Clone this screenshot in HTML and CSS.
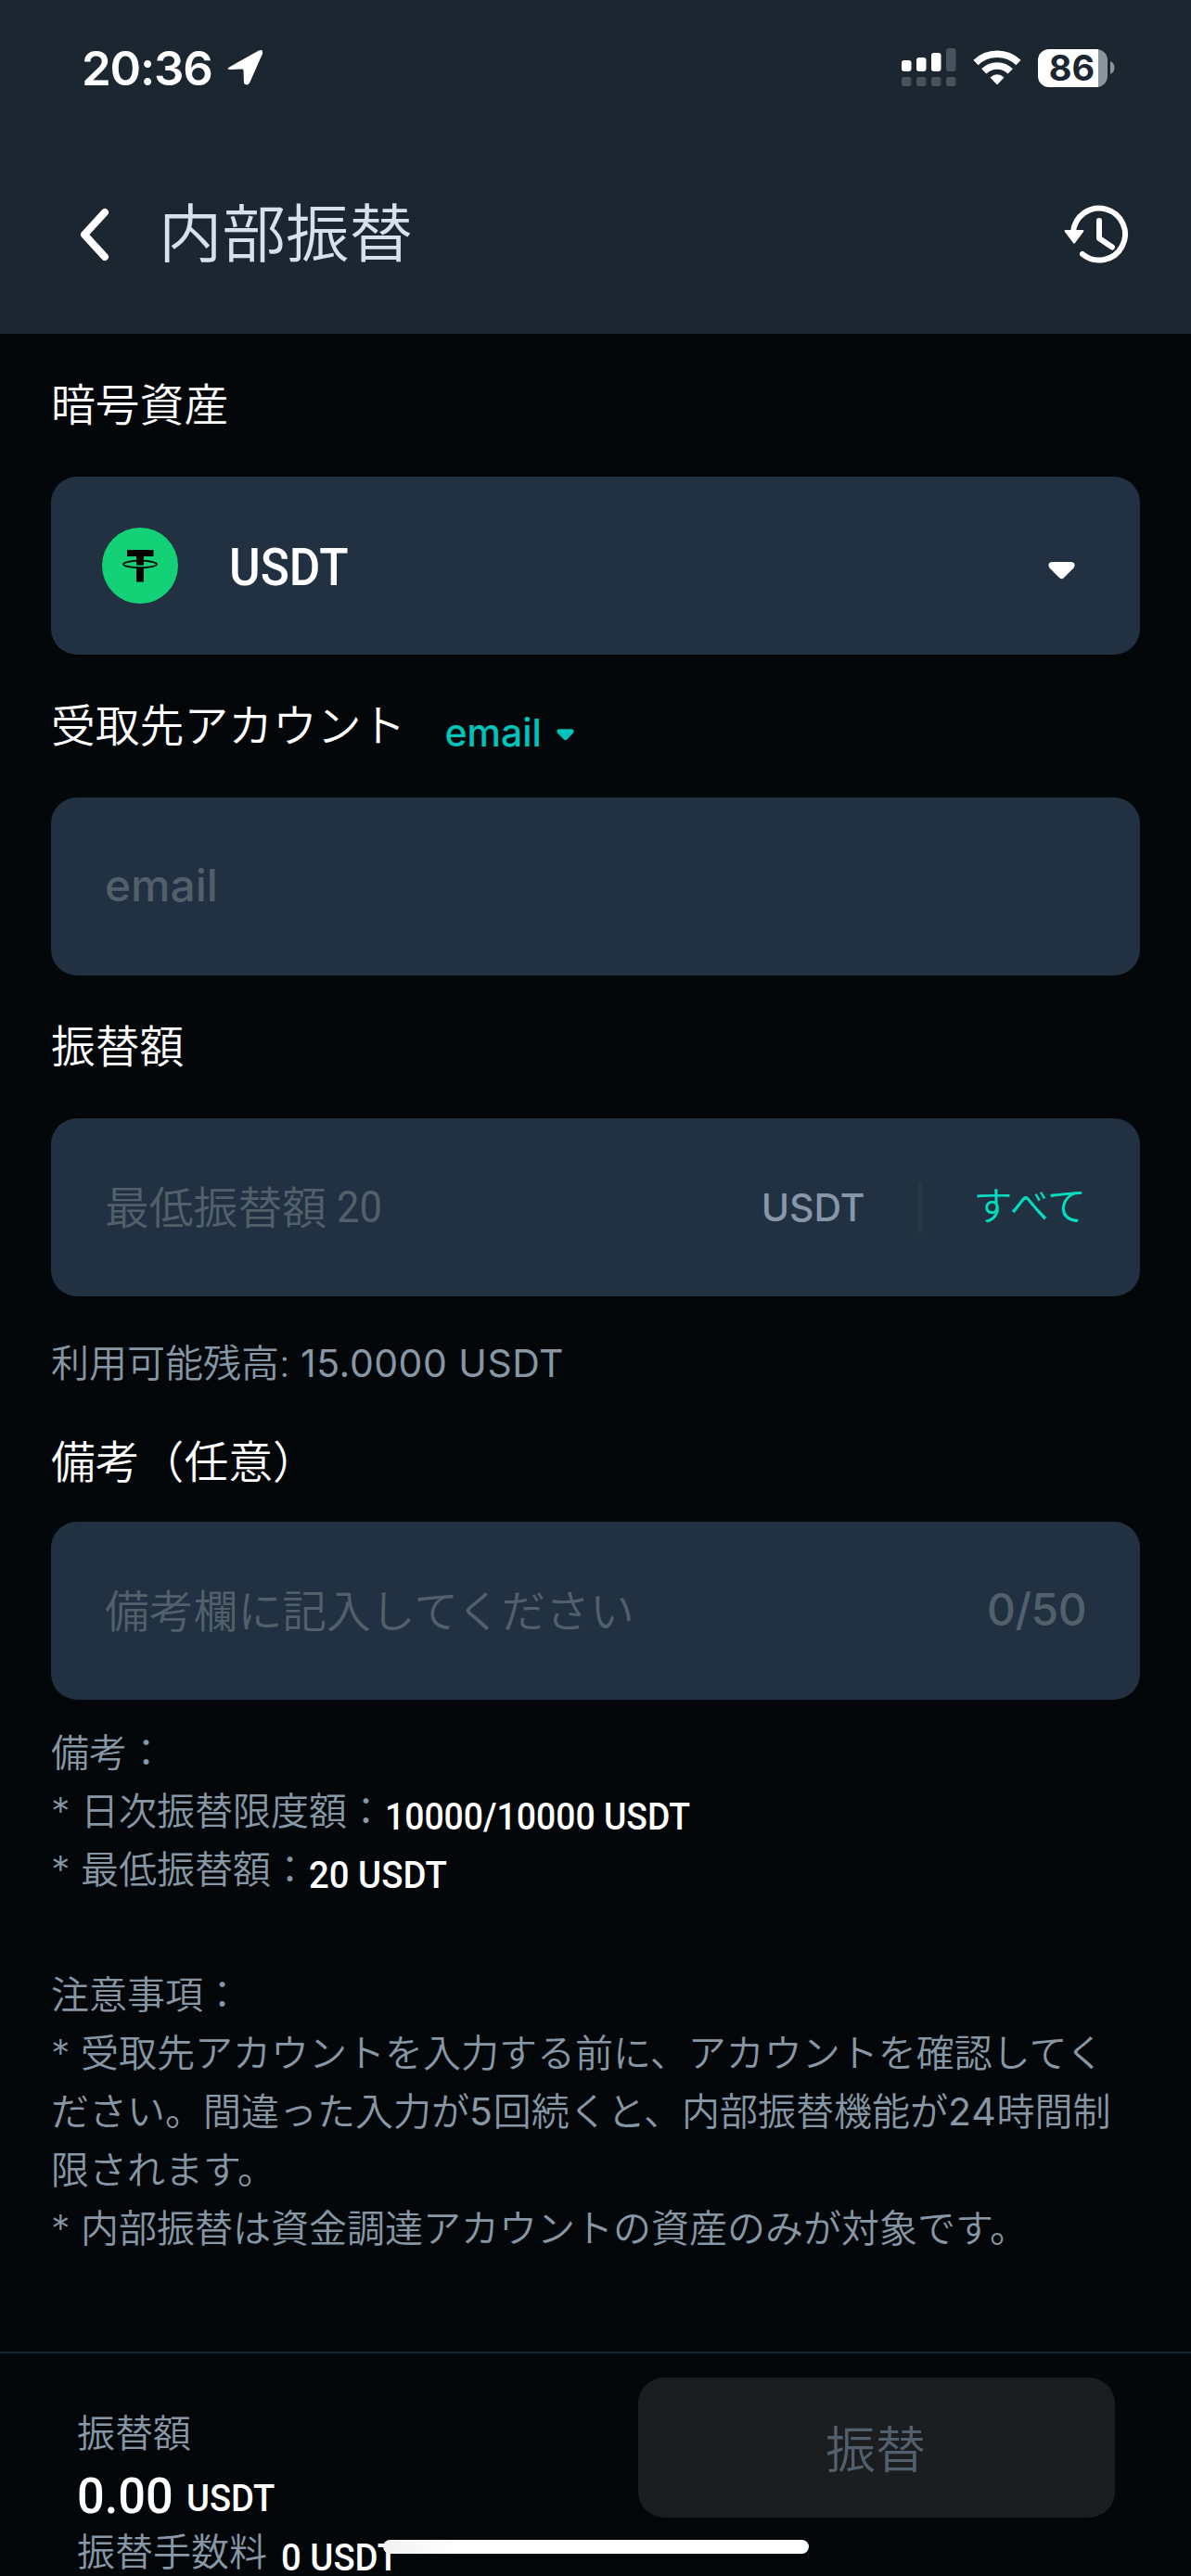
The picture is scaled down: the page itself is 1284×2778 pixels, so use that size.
FILE: index.html
```
<!DOCTYPE html>
<html lang="ja">
<head>
    <meta charset="UTF-8">
    <meta name="viewport" content="width=device-width, initial-scale=1.0">
    <title>内部振替</title>
    <link rel="stylesheet" href="styles.css">
</head>
<body>
    <header class="header">
        <div class="status-bar">
            <div class="status-left">
                <span class="time">20:36</span>
                <svg class="location" width="40" height="40" viewBox="0 0 40 40">
                    <path d="M3 19.5 L35 1.5 Q40 -0.5 39 5 L25 36.500 Q22.500 40 19 37 L18.500 23 Q18.500 21.500 17 21.500 L4 22 Q-0.500 22 3 19.500 Z" fill="#fff"/>
                </svg>
            </div>
            <div class="status-right">
                <svg width="59" height="42" viewBox="0 0 59 42">
                    <g fill="#fff">
                        <rect x="0" y="13" width="10.500" height="12" rx="3"/>
                        <rect x="16" y="10" width="10.500" height="15" rx="3"/>
                        <rect x="32" y="5" width="10.500" height="20" rx="3"/>
                    </g>
                    <g fill="#48535d">
                        <rect x="48" y="0" width="10.500" height="25" rx="3"/>
                        <rect x="0" y="31" width="10.500" height="10" rx="3"/>
                        <rect x="16" y="31" width="10.500" height="10" rx="3"/>
                        <rect x="32" y="31" width="10.500" height="10" rx="3"/>
                        <rect x="48" y="31" width="10.500" height="10" rx="3"/>
                    </g>
                </svg>
                <svg class="wifi" width="52" height="38" viewBox="0 0 52 38">
                    <path d="M3 13.500 A33 33 0 0 1 49 13.500" fill="none" stroke="#fff" stroke-width="7.500"/>
                    <path d="M11.800 22.800 A20 20 0 0 1 40.200 22.800" fill="none" stroke="#fff" stroke-width="7.500"/>
                    <path d="M18.500 29.500 Q26 23 33.500 29.500 L26.800 36.800 Q26 37.600 25.200 36.800 Z" fill="#fff"/>
                </svg>
                <div class="battery"><span>86</span></div>
                <svg class="battery-cap" width="5" height="14" viewBox="0 0 5 14">
                    <path d="M0 0 Q4.500 2 4.500 7 Q4.500 12 0 14 Z" fill="#8d959c"/>
                </svg>
            </div>
        </div>
        <div class="nav-bar">
            <svg class="back" width="32" height="58" viewBox="0 0 32 58">
                <path d="M27 5 L5 29 L27 53" fill="none" stroke="#fff" stroke-width="8" stroke-linecap="round" stroke-linejoin="round"/>
            </svg>
            <h1 class="title">内部振替</h1>
            <svg class="history" width="70" height="64" viewBox="0 0 70 64">
                <g fill="none" stroke="#fff" stroke-width="6" stroke-linecap="round" stroke-linejoin="round">
                    <path d="M10 30 A28 28 0 1 1 20 53"/>
                    <path d="M38 17 V36 L52 45.500"/>
                </g>
                <path d="M1.500 27 H20.500 Q22 27 21 29 L12 41 Q11 42.500 10 41 L1 29 Q0 27 1.500 27 Z" fill="#fff"/>
            </svg>
        </div>
    </header>

    <main class="content">
        <div class="label">暗号資産</div>
        <div class="field">
            <svg class="coin" width="82" height="82" viewBox="0 0 82 82">
                <circle cx="41" cy="41" r="41" fill="#12d176"/>
                <path d="M27 24 H55.500 V31 H45 V40.500 H37 V31 H27 Z M37 42.500 H45 V58.500 H37 Z" fill="#000"/>
                <ellipse cx="41" cy="39.500" rx="18" ry="3.800" fill="none" stroke="#000" stroke-width="1.700"/>
            </svg>
            <span class="coin-name narrow">USDT</span>
            <svg class="caret" width="29" height="19" viewBox="0 0 29 19">
                <path d="M4 0 H25 Q30.500 1 27.500 6.500 L17 17 Q14.500 19.500 12 17 L1.500 6.500 Q-1.500 1 4 0 Z" fill="#fff"/>
            </svg>
        </div>

        <div class="label">受取先アカウント
            <span class="type">email
                <svg width="19" height="13" viewBox="0 0 29 19">
                    <path d="M4 0 H25 Q30.500 1 27.500 6.500 L17 17 Q14.500 19.500 12 17 L1.500 6.500 Q-1.500 1 4 0 Z" fill="#00c4bc"/>
                </svg>
            </span>
        </div>
        <div class="field">
            <span class="placeholder latin">email</span>
        </div>

        <div class="label">振替額</div>
        <div class="field">
            <span class="placeholder">最低振替額</span>
            <span class="placeholder min-value narrow">20</span>
            <span class="unit">USDT</span>
            <span class="divider"></span>
            <span class="all">すべて</span>
        </div>
        <div class="balance">利用可能残高: <span class="balance-value">15.0000 USDT</span></div>

        <div class="label label-note">備考（任意）</div>
        <div class="field">
            <span class="placeholder">備考欄に記入してください</span>
            <span class="placeholder latin counter">0/50</span>
        </div>

        <div class="notes">
            <p>備考：</p>
            <p>* 日次振替限度額：<span class="value narrow">10000/10000 USDT</span></p>
            <p>* 最低振替額：<span class="value min narrow">20 USDT</span></p>
        </div>
        <div class="notes cautions">
            <p>注意事項：</p>
            <p>* 受取先アカウントを入力する前に、アカウントを確認してく<br>ださい。間違った入力が<span class="num">5</span>回続くと、内部振替機能が<span class="num">24</span>時間制<br>限されます。</p>
            <p>* 内部振替は資金調達アカウントの資産のみが対象です。</p>
        </div>
    </main>

    <footer class="footer">
        <div class="summary">
            <div class="summary-label">振替額</div>
            <div class="amount"><span class="narrow amount-value">0.00</span><span class="narrow amount-unit">USDT</span></div>
            <div class="summary-label">振替手数料<span class="narrow fee">0 USDT</span></div>
        </div>
        <button class="submit" disabled>振替</button>
        <div class="home-indicator"></div>
    </footer>
</body>
</html>
```
FILE: styles.css
```
* {
    box-sizing: border-box;
}
body {
    margin: 0;
    width: 1284px;
    height: 2778px;
    display: flex;
    flex-direction: column;
    overflow: hidden;
    background-color: #030709;
    color: #fff;
    font-family: Inter, "Noto Sans CJK JP", sans-serif;
    font-weight: 350;
}
svg {
    display: block;
    flex-shrink: 0;
}
p {
    margin: 0;
}
.narrow {
    display: inline-block;
    font-family: Roboto, sans-serif;
    font-weight: 500;
    transform: scaleX(0.91);
    transform-origin: left center;
}

/* header */
.header {
    height: 360px;
    background-color: #1b2631;
}
.status-bar {
    height: 146px;
    padding: 0 82px 0 88px;
    display: flex;
    align-items: center;
    justify-content: space-between;
}
.status-left,
.status-right {
    display: flex;
    align-items: center;
}
.time {
    font-size: 51px;
    font-weight: 600;
    letter-spacing: -1.2px;
}
.location {
    margin-left: 15px;
}
.wifi {
    margin-left: 18px;
}
.battery {
    width: 75px;
    height: 41px;
    padding-right: 2px;
    margin-left: 18px;
    border-radius: 12px;
    background: linear-gradient(to right, #fff 65px, #8d959c 65px);
    color: #1b2631;
    font-size: 38px;
    font-weight: 700;
    line-height: 41px;
    text-align: center;
}
.battery-cap {
    margin-left: 3px;
}
.nav-bar {
    height: 214px;
    padding: 0 67px 0 86px;
    display: flex;
    align-items: center;
}
.title {
    margin: 0 auto 0 53px;
    color: #d8e0f0;
    font-size: 68.5px;
    font-weight: 350;
    line-height: 214px;
}

/* form */
.content {
    flex: 1;
    padding: 0 55px;
}
.label {
    height: 154px;
    padding-bottom: 7px;
    display: flex;
    align-items: center;
    font-size: 47.8px;
}
.type {
    margin: 21px 0 0 42px;
    display: flex;
    align-items: center;
    gap: 16px;
    color: #00c4bc;
    font-size: 41px;
    font-weight: 500;
}
.type svg {
    margin-top: 4px;
}
.field {
    height: 192px;
    padding: 0 58px;
    display: flex;
    align-items: center;
    border-radius: 28px;
    background-color: #213141;
}
.coin {
    margin-left: -3px;
}
.coin-name {
    margin: 4px 0 0 55px;
    font-size: 55px;
    transform: scaleX(0.935);
}
.caret {
    margin: 10px 12px 0 auto;
}
.placeholder {
    padding-bottom: 6px;
    color: #51606a;
    font-size: 47.8px;
}
.latin {
    padding-bottom: 2px;
    font-weight: 500;
}
.min-value {
    margin-left: 11px;
    padding-bottom: 0;
    font-weight: 400;
}
.counter {
    margin-left: auto;
    font-weight: 450;
    letter-spacing: -0.5px;
}
.unit {
    margin-left: auto;
    color: #8796a8;
    font-size: 41px;
    font-weight: 500;
}
.divider {
    width: 4px;
    height: 55px;
    margin: 0 56px 0 57px;
    background-color: #273846;
}
.all {
    padding-bottom: 10px;
    color: #04dcc0;
    font-size: 42px;
    white-space: nowrap;
}
.balance {
    height: 142px;
    color: #8797a5;
    font-size: 41px;
    line-height: 144px;
}
.balance-value {
    font-weight: 400;
    letter-spacing: 0.5px;
}
.label-note {
    height: 74px;
    margin-bottom: 27px;
}
.notes {
    margin-top: 26px;
    color: #8797a5;
    font-size: 41px;
    line-height: 63.2px;
    white-space: nowrap;
}
.cautions {
    margin-top: 71px;
}
.num {
    font-weight: 400;
    letter-spacing: 0.8px;
}
.value {
    height: 60px;
    color: #fff;
    line-height: 60px;
    vertical-align: -5px;
}
.notes p {
    height: 63.2px;
}
.cautions p {
    height: auto;
}
.min,
.fee {
    transform: scaleX(0.935);
}

/* footer */
.footer {
    position: relative;
    height: 242px;
    padding: 26px 82px 0 83px;
    display: flex;
    justify-content: space-between;
    align-items: flex-start;
    border-top: 2px solid #1a262f;
}
.summary {
    padding-top: 30px;
}
.summary-label {
    height: 60px;
    color: #8797a5;
    font-size: 41px;
    line-height: 60px;
    white-space: nowrap;
}
.amount {
    height: 68px;
    line-height: 75px;
    white-space: nowrap;
}
.amount-value {
    font-size: 54px;
    transform: scaleX(0.97);
}
.amount-unit {
    margin-left: 11px;
    font-size: 41px;
    vertical-align: 2px;
    transform: scaleX(0.93);
}
.fee {
    margin-left: 15px;
    color: #fff;
    vertical-align: -5px;
}
.submit {
    width: 514px;
    height: 151px;
    padding: 0 2px 3px 0;
    border: none;
    border-radius: 28px;
    background-color: #1c1d1f;
    color: #52606d;
    font-family: inherit;
    font-size: 54px;
    font-weight: 350;
}
.home-indicator {
    position: absolute;
    left: 413px;
    bottom: 24px;
    width: 459px;
    height: 15px;
    border-radius: 8px;
    background: linear-gradient(to right, #f2f2f2, #fff 80px);
}
```
